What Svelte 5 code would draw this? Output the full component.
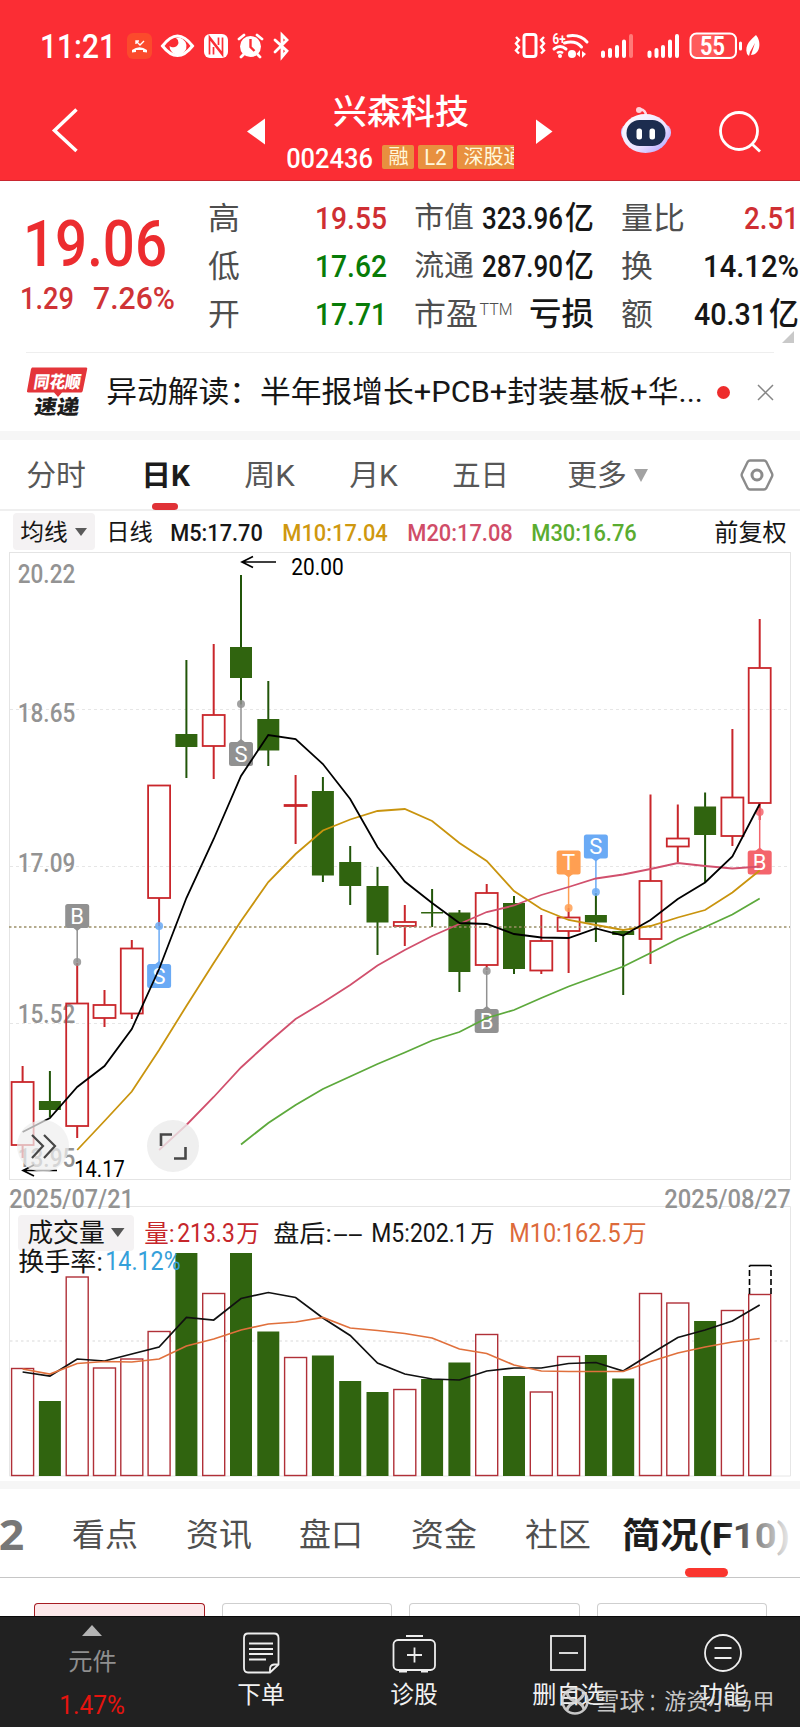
<script>
  // ── Quote header ──────────────────────────────────────────────
  // every value is a list of [text, width] runs
  const quoteCols = [
    [
      { label: '高', lw: 30, size: 31, tone: 'up', runs: [['19.55', 70]] },
      { label: '低', lw: 30, size: 31, tone: 'down', runs: [['17.62', 70]] },
      { label: '开', lw: 30, size: 31, tone: 'down', runs: [['17.71', 70]] },
    ],
    [
      { label: '市值', lw: 58, size: 29, runs: [['323.96', 79], ['亿', 27]] },
      { label: '流通', lw: 58, size: 29, runs: [['287.90', 79], ['亿', 27]] },
      { label: '市盈', lw: 62, size: 31, sup: 'TTM', runs: [['亏损', 63]] },
    ],
    [
      { label: '量比', lw: 62, size: 31, tone: 'up', runs: [['2.51', 53]] },
      { label: '换', lw: 30, size: 31, runs: [['14.12%', 94]] },
      { label: '额', lw: 30, size: 31, runs: [['40.31', 71], ['亿', 28]] },
    ],
  ]

  const periods = [
    ['分时', 58], ['日K', 47], ['周K', 49], ['月K', 47], ['五日', 55], ['更多', 58],
  ]

  const averages = [
    ['M5:17.70', 91, 'm5'], ['M10:17.04', 104, 'm10'],
    ['M20:17.08', 104, 'm20'], ['M30:16.76', 104, 'm30'],
  ]

  // ── K line ────────────────────────────────────────────────────
  const X0 = 22.6
  const STEP = 27.3
  const cx = (i) => X0 + i * STEP

  // [up, high, bodyTop, bodyBottom, low, volumeTop]
  const candles = [
    [1, 1066, 1082, 1145, 1158, 1368.5],
    [0, 1071, 1101, 1110, 1117, 1401],
    [1, 963, 1003.5, 1126, 1138, 1277],
    [1, 990, 1005, 1018, 1027, 1368],
    [1, 940, 948.5, 1013.5, 1019, 1359],
    [1, 785.5, 785.5, 898, 926, 1331.5],
    [0, 660, 734, 747, 778, 1253],
    [1, 644, 715, 746, 779, 1293.5],
    [0, 575, 647, 678, 705, 1253],
    [0, 681, 719, 750.5, 766, 1331.5],
    [1, 775, 805, 806, 844, 1357.5],
    [0, 777, 791, 875.5, 882, 1355.5],
    [0, 846, 862, 886, 905, 1381],
    [0, 867, 886, 922.5, 955, 1392],
    [1, 905, 922, 926, 946, 1389.5],
    [0, 889, 912, 913.5, 927, 1379],
    [0, 910, 912.5, 972, 992, 1362.5],
    [1, 884, 893, 965, 970, 1334.5],
    [0, 896, 903, 969, 974, 1376],
    [1, 915, 941, 970.5, 974, 1392],
    [1, 908, 917.5, 931, 973, 1356.5],
    [0, 893, 915, 922.5, 942, 1355],
    [0, 930, 931, 935, 995, 1378.5],
    [1, 794.5, 881, 939, 964, 1293.5],
    [1, 804.5, 838.5, 846.5, 862, 1303],
    [0, 792.5, 806.5, 835, 882, 1321],
    [1, 729, 797.5, 836, 846, 1310.5],
    [1, 619, 668, 803, 820, 1294.5],
  ].map(([up, high, top, bottom, low, vol], i) => ({ up, high, top, bottom, low, vol, x: cx(i) }))

  function line(start, ys) {
    return ys.map((y, i) => `${cx(start + i).toFixed(1)},${y}`).join(' ')
  }

  const ma5 = line(0, [1132, 1118, 1087, 1066, 1029, 969, 898, 839, 776, 735, 739, 764, 799, 847, 881.5, 903, 923, 924, 934, 937.5, 938, 928.5, 935.5, 920, 899, 882.5, 856.5, 804])
  const ma10 = line(2, [1150, 1121, 1091.5, 1050, 1006, 963, 921, 882, 854, 830.5, 819.5, 811, 809, 821, 843, 861, 891, 909, 920, 925, 930, 926, 917.5, 910, 892.5, 870.5])
  const ma20 = line(5, [1150, 1125, 1097, 1067.5, 1042.5, 1019, 1002.5, 985, 965.5, 950, 936, 924, 912, 905.5, 895, 887, 878.5, 874.5, 869, 863, 866, 868.5, 866.5])
  const ma30 = line(8, [1144.5, 1123, 1105, 1089, 1076.5, 1064, 1052.5, 1040.5, 1032, 1018, 1010, 998, 986.5, 976.5, 966.5, 953, 939, 927, 914.5, 898.5])
  const vma5 = line(0, [1372, 1376, 1359, 1361, 1354, 1347, 1317.5, 1320, 1298.5, 1292.5, 1297.5, 1318, 1335.5, 1363, 1374, 1379, 1380, 1371, 1368, 1368, 1363.5, 1362.5, 1371, 1354, 1337.5, 1330, 1321, 1305])
  const vma10 = line(0, [1369, 1374, 1363.5, 1361.5, 1362, 1359, 1346, 1339, 1330, 1324, 1322, 1317.5, 1328, 1330.5, 1333.5, 1338, 1349, 1353.5, 1365, 1371, 1371.5, 1371.5, 1371.5, 1361.5, 1353, 1347, 1342, 1338.5])

  const axis = [['20.22', 574], ['18.65', 713], ['17.09', 863], ['15.52', 1014], ['13.95', 1158]]

  // trade marks: candle index, letter, colour, box top, dot y
  const marks = [
    { i: 2, t: 'B', c: '#919191', y: 904, dot: 962 },
    { i: 8, t: 'S', c: '#919191', y: 742, dot: 704 },
    { i: 5, t: 'S', c: '#6aaaf5', y: 964, dot: 926 },
    { i: 17, t: 'B', c: '#919191', y: 1009, dot: 971 },
    { i: 20, t: 'T', c: '#ff9f52', y: 850.5, dot: 908 },
    { i: 21, t: 'S', c: '#6aaaf5', y: 834.5, dot: 892 },
    { i: 27, t: 'B', c: '#f4646c', y: 850.5, dot: 812 },
  ]

  const sections = [['看点', 64], ['资讯', 64], ['盘口', 62], ['资金', 64], ['社区', 64]]
</script>

{#snippet fit(text, width, size, cls = '')}
  <svg class="fit {cls}" {width} height={size}>
    <text x={-size * 0.03} y={size * 0.86} font-size={size} textLength={width + size * 0.06} lengthAdjust="spacingAndGlyphs">{text}</text>
  </svg>
{/snippet}

{#snippet label(text, x, yc, width, size, cls = '')}
  <text class={cls} x={x - size * 0.03} y={yc + size * 0.36} font-size={size} textLength={width + size * 0.06} lengthAdjust="spacingAndGlyphs">{text}</text>
{/snippet}

<div class="app">
  <header>
    <div class="status">
      {@render fit('11:21', 74, 33, 'medium')}
      <svg width="174" height="34" viewBox="124 29 174 34">
        <rect x="127" y="33" width="25" height="26" rx="6" fill="#fb4a2c" />
        <path d="M136 41l4 4 4-4M136 44v-3h3" fill="none" stroke="#fff" stroke-width="1.400" />
        <path d="M132 50q7.500-5.500 15 0v2.500l-4-.500v-2h-7v2l-4 .500z" fill="#fff" />
        <path d="M162.500 46q15-20 30 0q-15 19-30 0z" fill="none" stroke="#fff" stroke-width="3" />
        <path d="M176 38a8.500 8.500 0 1 1-6.500 8a5.500 5.500 0 0 0 9-3a5.500 5.500 0 0 0-2.500-5z" fill="#fff" />
        <rect x="204" y="34" width="24" height="24" rx="6" fill="#fff" />
        <path d="M209.500 54.500V37l12.500 16M222.500 37.500V55l-12.500-16M213.500 47v7.500M218.500 37.500V45" fill="none" stroke="#fb2d34" stroke-width="1.700" />
        <circle cx="250.500" cy="46.500" r="10.500" fill="#fff" />
        <path d="M239 39l5-4M262 39l-5-4M244 54l-3 3M257 54l3 3" stroke="#fff" stroke-width="2.800" stroke-linecap="round" />
        <path d="M250.500 39v8l4 4" fill="none" stroke="#fb2d34" stroke-width="2.400" />
        <path d="M275 40l12 11-5 6V35l5 5-12 12" fill="none" stroke="#fff" stroke-width="2.800" stroke-linecap="round" />
      </svg>
      <svg class="right" width="250" height="34" viewBox="512 29 250 34">
        <g fill="none" stroke="#fff">
          <rect x="524" y="34.500" width="12" height="22" rx="2.500" stroke-width="3" />
          <path d="M516 37l3 3-3 3.500 3 3.500-3 3.500 3 3M544 37l-3 3 3 3.500-3 3.500 3 3.500-3 3" stroke-width="2.400" />
          <path d="M568 36q12-2 19 6M564.500 43q11-3 17 4M554 49q6-5 12 0" stroke-width="3" stroke-linecap="round" />
          <path d="M557 53q3-2 6 0" stroke-width="2.500" />
        </g>
        <circle cx="560" cy="56" r="2" fill="#fff" />
        <circle cx="572" cy="54" r="4" fill="#fff" />
        <path d="M580 50v7l-3.500-3zM582 58v-7l4 3z" fill="#fff" />
        <text class="w700" x="552.500" y="43.500" font-size="14" fill="#fff" textLength="13" lengthAdjust="spacingAndGlyphs">6+</text>
        <g stroke="#fff" stroke-width="4" stroke-linecap="round">
          <path d="M603 52.500V56M610 50v6M617 47v9M624 41.500V56" />
          <path d="M631 36v20" stroke="#ff7a78" />
          <path d="M649.500 52.500V56M656.500 50v6M663 47v9M670 41.500V56M677 36v20" />
        </g>
        <rect x="690.500" y="33.500" width="45.500" height="24.500" rx="6" fill="#ff5b5b" stroke="#fff" stroke-width="2" />
        <rect x="717" y="35" width="17.500" height="21.500" rx="4" fill="#fb3b40" />
        <path d="M740.500 43v6" stroke="#fff" stroke-width="3" stroke-linecap="round" />
        <path d="M747 54c-3-10 5-15 9-19 6 7 4 20-5 20l4-12-5 9-1 4z" fill="#fff" />
        <text class="w700" x="700" y="54.500" font-size="25" fill="#fff" textLength="25" lengthAdjust="spacingAndGlyphs">55</text>
      </svg>
    </div>

    <div class="nav">
      <svg width="287" height="89" viewBox="0 92 287 89">
        <path d="M76.500 109.500L54.500 130.500 76.500 151" fill="none" stroke="#fff" stroke-width="3.500" />
        <path d="M247 131.500l18-13v26z" fill="#fff" />
      </svg>
      <div class="title">
        {@render fit('兴森科技', 134, 34, 'name')}
        <div class="codes">
          {@render fit('002436', 85, 28.5, 'medium')}
          <span class="tag t1">{@render fit('融', 19, 20)}</span>
          <span class="tag t2">{@render fit('L2', 21, 22)}</span>
          <span class="tag t3">{@render fit('深股通', 59, 20)}</span>
        </div>
      </div>
      <svg width="286" height="89" viewBox="514 92 286 89">
        <defs>
          <linearGradient id="robot" x1="0" y1="0" x2="1" y2="1">
            <stop offset="0" stop-color="#ffffff" />
            <stop offset="0.6" stop-color="#ece2ff" />
            <stop offset="1" stop-color="#a99bff" />
          </linearGradient>
        </defs>
        <path d="M536 119.500v24.500l16.500-12.500z" fill="#fff" />
        <circle cx="639" cy="110" r="3" fill="#ffd0d8" />
        <path d="M640 109q6 1 6 7" fill="none" stroke="#ffd9e6" stroke-width="2.500" />
        <rect x="621" y="124" width="50" height="17" rx="8" fill="#cfc2ff" />
        <ellipse cx="645.500" cy="133.500" rx="23.500" ry="19.500" fill="url(#robot)" />
        <rect x="626.500" y="120" width="39" height="26" rx="13" fill="#1c2c4f" />
        <rect x="636.500" y="128.500" width="5.500" height="11" rx="2.500" fill="#fff" />
        <rect x="649.500" y="128.500" width="5.500" height="11" rx="2.500" fill="#fff" />
        <circle cx="739" cy="131" r="18.500" fill="none" stroke="#fff" stroke-width="2.800" />
        <path d="M752 144l8 7.500" stroke="#fff" stroke-width="2.800" />
      </svg>
    </div>
  </header>

  <section class="quote">
    <div class="price">
      {@render fit('19.06', 140, 65, 'medium')}
      <div class="change">
        {@render fit('1.29', 52, 32, 'medium')}
        {@render fit('7.26%', 80, 32, 'medium')}
      </div>
    </div>
    {#each quoteCols as col}
      <div class="col">
        {#each col as cell}
          <div class="cell">
            <span class="key">
              {@render fit(cell.label, cell.lw, cell.size)}
              {#if cell.sup}{@render fit(cell.sup, 32, 17, 'sup')}{/if}
            </span>
            <span class="val {cell.tone ?? ''}">
              {#each cell.runs as [text, w]}{@render fit(text, w, 32, 'medium')}{/each}
            </span>
          </div>
        {/each}
      </div>
    {/each}
    <i class="corner"></i>
  </section>

  <section class="news">
    <svg width="62" height="52" viewBox="27 366 62 52">
      <path d="M32 367.500h54q1.500 0 1.200 1.500l-4.500 22q-.500 1.500-2 1.500H62l-4 4.500-4-4.500H28.500q-1.800 0-1.500-1.500l4-22z" fill="#e4353a" />
      <g transform="skewX(-9)" class="w900">
        <text x="94.500" y="388" font-size="17" fill="#fff" textLength="47" lengthAdjust="spacingAndGlyphs">同花顺</text>
        <text x="99" y="414" font-size="20" fill="#1d1d1d" textLength="45" lengthAdjust="spacingAndGlyphs">速递</text>
      </g>
    </svg>
    {@render fit('异动解读：半年报增长+PCB+封装基板+华...', 595, 29.5, 'headline')}
    <i class="dot"></i>
    <svg width="17" height="17" viewBox="0 0 17 17"><path d="M1 1l15 15M16 1L1 16" stroke="#858585" stroke-width="1.500" /></svg>
  </section>

  <nav class="periods">
    {#each periods as [text, w], i}
      <span class="period" class:on={i === 1}>
        {@render fit(text, w, 29)}
        {#if i === 5}<i class="caret big"></i>{/if}
      </span>
    {/each}
    <svg width="34" height="34" viewBox="0 0 34 34" fill="none" stroke="#8b8b8b">
      <path d="M10 2.500h14q1.500 0 2.300 1.300L32 15.500q.7 1.500 0 3L26.300 30.200q-.8 1.300-2.300 1.300H10q-1.500 0-2.300-1.300L2 18.500q-.7-1.500 0-3L7.700 3.800Q8.500 2.500 10 2.500z" stroke-width="2.400" />
      <circle cx="17" cy="17" r="5" stroke-width="3" />
    </svg>
  </nav>

  <div class="averages">
    <span class="pill">{@render fit('均线', 46, 23)}<i class="caret"></i></span>
    {@render fit('日线', 45, 23)}
    {#each averages as [text, w, tone]}
      {@render fit(text, w, 24, tone)}
    {/each}
    {@render fit('前复权', 71, 24)}
  </div>

  <svg class="chart" width="800" height="654" viewBox="0 552 800 654">
    <rect x="9.500" y="552.500" width="781" height="627" fill="none" stroke="#e4e4e4" />
    {#each [709.5, 866.5, 1023.5] as y}
      <path d="M10 {y}H790" stroke="#e6e6e6" stroke-dasharray="3 3" />
    {/each}
    {#each axis as [text, y]}
      {@render label(text, 18.5, y, 56, 26, 'axis')}
    {/each}

    {#each candles as c}
      {#if c.up}
        <path d="M{c.x} {c.high}V{c.top}M{c.x} {c.bottom}V{c.low}" stroke="#c9262b" stroke-width="2" />
        <rect x={c.x - 11} y={c.top} width="22" height={c.bottom - c.top} fill="none" stroke="#c9262b" stroke-width="1.800" />
      {:else}
        <path d="M{c.x} {c.high}V{c.low}" stroke="#215509" stroke-width="2" />
        <rect x={c.x - 11} y={c.top} width="22" height={c.bottom - c.top} fill="#30640f" />
      {/if}
    {/each}

    <path d="M9 927H790" stroke="#9c9068" stroke-width="1.600" stroke-dasharray="2.500 2.500" />

    {#each marks as m}
      {@const x = cx(m.i)}
      {@const below = m.y > m.dot}
      <path d="M{x} {m.dot}V{below ? m.y : m.y + 24}" stroke={m.c} stroke-width="1.500" />
      <circle cx={x} cy={m.dot} r="4" fill={m.c} opacity="0.85" />
      <path d={below ? `M${x - 5} ${m.y + 1}l5-4 5 4z` : `M${x - 5} ${m.y + 23}l5 4 5-4z`} fill={m.c} />
      <rect x={x - 12} y={m.y} width="24" height="24" rx="2.500" fill={m.c} />
      <text class="mark" x={x} y={m.y + 19.5} font-size="22" text-anchor="middle">{m.t}</text>
    {/each}

    <g fill="none" stroke-width="1.800">
      <polyline points={ma30} stroke="#5da93c" />
      <polyline points={ma20} stroke="#d1506d" />
      <polyline points={ma10} stroke="#c9940e" />
      <polyline points={ma5} stroke="#000" />
    </g>

    <path d="M276 562H242M253 556.500L242 562 253 567.500" fill="none" stroke="#000" stroke-width="1.700" />
    {@render label('20.00', 292, 566.5, 51, 23, 'plain')}
    <path d="M57 1170.500H23M34 1165L23 1170.500 34 1176" fill="none" stroke="#000" stroke-width="1.700" />
    {@render label('14.17', 75, 1168.5, 49, 23, 'plain')}

    <circle cx="43" cy="1146" r="26" fill="#efefef" opacity="0.72" />
    <path d="M32 1135l11 11-11 12M44 1135l11 11-11 12" fill="none" stroke="#474747" stroke-width="2.200" />
    <circle cx="173" cy="1146" r="26" fill="#ebebeb" opacity="0.8" />
    <path d="M161 1146v-11.500h11M174 1158.500h11.500V1147" fill="none" stroke="#474747" stroke-width="2.600" />
  </svg>

  <svg class="chart" width="800" height="275" viewBox="0 1206 800 275">
    <path d="M9.500 1476V1206.500H790.500V1476z" fill="none" stroke="#e6e6e6" />
    <path d="M10 1341H790" stroke="#e6e6e6" stroke-width="1.500" stroke-dasharray="2.500 3" />
    {@render label('2025/07/21', 10, 1198.5, 123, 26, 'axis')}
    {@render label('2025/08/27', 665, 1198.5, 125, 26, 'axis')}

    {#each candles as c}
      {#if c.up}
        <rect x={c.x - 11} y={c.vol} width="22" height={1475.5 - c.vol} fill="#fff" stroke="#b03038" stroke-width="1.400" />
      {:else}
        <rect x={c.x - 11} y={c.vol} width="22" height={1476 - c.vol} fill="#30640f" />
      {/if}
    {/each}
    <path d="M749.500 1294v-28.500M771 1294v-28.500" stroke="#000" stroke-width="1.600" stroke-dasharray="6 3" />
    <path d="M749.500 1265.500H771" stroke="#000" stroke-width="1.600" />

    <g fill="none" stroke-width="1.700">
      <polyline points={vma5} stroke="#111" />
      <polyline points={vma10} stroke="#e0703c" />
    </g>

    <rect x="18" y="1215" width="116" height="36" rx="4" fill="#f4f2f3" />
    {@render label('成交量', 28, 1233, 76, 26)}
    <path d="M111 1228h13.500l-6.700 9z" fill="#555" />
    {@render label('量:', 145, 1233, 29, 24, 'vol')}
    {@render label('213.3', 178, 1232.5, 56, 25, 'vol')}
    {@render label('万', 237, 1233, 22, 24, 'vol')}
    {@render label('盘后:', 274, 1233, 57, 24)}
    {@render label('--', 334, 1233, 28, 24)}
    {@render label('M5:202.1', 372, 1232.5, 95, 25)}
    {@render label('万', 471, 1233, 23, 24)}
    {@render label('M10:162.5', 510, 1232.5, 110, 25, 'vm10')}
    {@render label('万', 623, 1233, 23, 24, 'vm10')}
    {@render label('换手率:', 19, 1261.5, 83, 26)}
    {@render label('14.12%', 106, 1261, 74, 25, 'rate')}
  </svg>

  <nav class="sections">
    {@render fit('2', 23, 42, 'two')}
    {#each sections as [text, w]}
      {@render fit(text, w, 31.5)}
    {/each}
    <span class="active">{@render fit('简况(F10)', 166, 35)}</span>
  </nav>

  <div class="cards">
    <i class="card picked"></i><i class="card"></i><i class="card"></i><i class="card"></i>
  </div>

  <footer>
    <div class="sector">
      <i class="up-caret"></i>
      {@render fit('元件', 47, 24)}
      {@render fit('1.47%', 64, 26, 'pct')}
    </div>
    <div class="action">
      <svg width="44" height="44" viewBox="239 1631 44 44">
        <path d="M248 1633.500h26q4.500 0 4.500 4.500v26.500l-8.500 8h-22q-4 0-4-4.500v-30q0-4.500 4-4.500z" />
        <path d="M249 1643.500h24M249 1649h24M249 1654h24M249 1659.500h17M270 1672v-3q0-4 4-4.500h4" />
      </svg>
      {@render fit('下单', 46, 24)}
    </div>
    <div class="action">
      <svg width="44" height="44" viewBox="392 1631 44 44">
        <rect x="393.500" y="1640" width="41.500" height="30" rx="4.500" />
        <path d="M406 1636h17M407 1655h15M414.500 1647.500v15M399 1671.500h8M421 1671.500h7" />
      </svg>
      {@render fit('诊股', 46, 24)}
    </div>
    <div class="action">
      <svg width="44" height="44" viewBox="546 1631 44 44">
        <rect x="551" y="1636" width="34" height="34" />
        <path d="M559 1653h19" />
      </svg>
      {@render fit('删自选', 71, 24)}
    </div>
    <div class="action">
      <svg width="44" height="44" viewBox="700.500 1631 44 44">
        <circle cx="722.500" cy="1653" r="18" />
        <path d="M714 1648h17M714 1658h17" />
      </svg>
      {@render fit('功能', 46, 24)}
    </div>
    <div class="watermark">
      <svg width="32" height="32" viewBox="0 0 32 32" fill="none" stroke="currentColor">
        <circle cx="16" cy="16" r="12.500" stroke-width="2.500" />
        <path d="M8 7q1 7 8 9t9 8M25 8q-2 6-9 9t-8 8" stroke-width="3" />
      </svg>
      {@render fit('雪球', 49, 24)}
      {@render fit('：', 16, 24, 'colon')}
      {@render fit('游资小马甲', 109, 22)}
    </div>
  </footer>
</div>

<style>
  :global(body) {
    margin: 0;
    background: #fff;
  }

  .app {
    width: 800px;
    height: 1727px;
    overflow: hidden;
    background: #fff;
    color: #161616;
    font-family: Roboto, 'Noto Sans CJK SC', sans-serif;
  }

  svg {
    display: block;
    flex: none;
  }

  .fit,
  .chart {
    overflow: visible;
  }

  .fit text,
  .chart text {
    fill: currentColor;
  }

  .medium { font-weight: 500; }
  .w700 { font-weight: 700; }
  .w900 { font-weight: 900; }

  /* ── Header ── */
  header {
    box-sizing: border-box;
    height: 181px;
    background: #fb2d34;
    border-bottom: 1px solid #c92730;
    color: #fff;
  }

  .status {
    height: 92px;
    display: flex;
    align-items: center;
    padding: 0 38px 0 41px;
    gap: 9px;
  }

  .status .right { margin-left: auto; }

  .nav {
    display: grid;
    grid-template-columns: 287px 227px 286px;
  }

  .title {
    overflow: hidden;
    display: flex;
    flex-direction: column;
    align-items: center;
  }

  .name {
    margin-top: 3px;
    font-weight: 500;
  }

  .codes {
    align-self: stretch;
    display: flex;
    align-items: center;
    height: 24px;
    margin-top: 16px;
  }

  .tag {
    flex: none;
    display: flex;
    align-items: center;
    justify-content: center;
    height: 24px;
    margin-left: 4px;
    border-radius: 2px;
    background: #e8903f;
    color: #fff8dc;
  }

  .t1 { width: 32px; margin-left: 10px; }
  .t2 { width: 35px; }
  .t3 { width: 73px; }

  /* ── Quote ── */
  .quote {
    position: relative;
    box-sizing: border-box;
    height: 172px;
    display: grid;
    grid-template-columns: 208px 206px 207px 179px;
  }

  .quote::after {
    content: '';
    position: absolute;
    left: 26px;
    right: 26px;
    bottom: 0;
    height: 1px;
    background: #eee;
  }

  .price {
    padding: 28.5px 0 0 25px;
    color: #ec2c2f;
  }

  .change {
    display: flex;
    gap: 21px;
    margin: 6.5px 0 0 -4px;
    color: #cf3336;
  }

  .col { padding: 12px 28px 0 1px; }
  .col:nth-child(4) { padding-right: 2px; }

  .cell {
    height: 48px;
    display: flex;
    align-items: center;
    justify-content: space-between;
  }

  .key,
  .val { display: flex; align-items: center; }
  .key { color: #4e4e4e; }
  .val { gap: 4px; }
  .up { color: #cf2f33; }
  .down { color: #087c08; }
  .sup { margin: -10px 0 0 3px; font-weight: 300; }

  .corner {
    position: absolute;
    right: 6px;
    bottom: 10px;
    border-left: 12px solid transparent;
    border-bottom: 12px solid #c9c9c9;
  }

  /* ── News ── */
  .news {
    height: 78px;
    display: flex;
    align-items: center;
    padding-left: 27px;
  }

  .headline { margin-left: 18px; }
  .dot { width: 13px; height: 13px; margin: 0 27px 0 15px; border-radius: 50%; background: #ee2c2c; }

  /* ── Period tabs ── */
  .periods {
    box-sizing: border-box;
    height: 80px;
    border-top: 9px solid #f6f6f6;
    border-bottom: 2px solid #efefef;
    padding-left: 27px;
    display: grid;
    grid-template-columns: 115px 103px 105px 103px 115px 172px 34px;
    align-items: center;
    color: #575757;
  }

  .period {
    position: relative;
    box-sizing: border-box;
    height: 69px;
    padding-top: 2px;
    display: flex;
    align-items: center;
  }

  .on { color: #1c1c1c; font-weight: 700; }

  .on::after {
    content: '';
    position: absolute;
    left: 10px;
    bottom: -1px;
    width: 26px;
    height: 7px;
    border-radius: 3.5px;
    background: #e03237;
  }

  .caret {
    border: 6px solid transparent;
    border-top: 8px solid #5a5a5a;
    border-bottom: 0;
    margin-left: 8px;
  }

  .caret.big { border-width: 13px 7.5px 0; border-top-color: #a2a2a2; margin-left: 8px; }

  .averages {
    height: 41px;
    padding-left: 13px;
    display: grid;
    grid-template-columns: 94px 64px 112px 125px 124px 183px 80px;
    align-items: center;
  }

  .pill {
    width: 82px;
    height: 37px;
    border-radius: 4px;
    background: #f4f2f3;
    display: flex;
    align-items: center;
    justify-content: center;
  }

  .m5 { font-weight: 500; }
  .m10 { color: #cf980f; font-weight: 500; }
  .m20 { color: #d04d68; font-weight: 500; }
  .m30 { color: #5aac30; font-weight: 500; }

  /* ── Charts ── */
  .chart .axis { fill: #939393; font-weight: 500; }
  .chart .plain { fill: #000; }
  .chart .mark { fill: #fff; }
  .chart .vol { fill: #c6262b; }
  .chart .vm10 { fill: #dd6a3a; }
  .chart .rate { fill: #35a0da; }

  /* ── Sections ── */
  .sections {
    box-sizing: border-box;
    height: 97px;
    padding-top: 4px;
    border-top: 8px solid #f6f6f6;
    border-bottom: 1px solid #c6c6c6;
    display: grid;
    grid-template-columns: 73px 114px 113px 112px 114px 97px 177px;
    align-items: center;
    color: #505050;
  }

  .two { font-family: 'Noto Sans', sans-serif; font-weight: 700; color: #777; }

  .active {
    position: relative;
    height: 84px;
    display: flex;
    align-items: center;
    color: #1e1e1e;
    font-weight: 700;
  }

  .active::before {
    content: '';
    position: absolute;
    inset: 0 0 12px 100px;
    background: linear-gradient(90deg, #fff0, #fff 95%);
    z-index: 1;
  }

  .active::after {
    content: '';
    position: absolute;
    left: 62px;
    bottom: 0;
    width: 43px;
    height: 9px;
    border-radius: 4.5px;
    background: #fa362f;
  }

  .cards {
    height: 38px;
    padding: 25px 33px 0 34px;
    box-sizing: border-box;
    display: grid;
    grid-template-columns: repeat(4, 1fr);
    gap: 17px;
  }

  .card { border: 1px solid #cfcfcf; border-bottom: 0; border-radius: 4px 4px 0 0; }
  .picked { border-color: #a61c22; background: #fce8ea; }

  /* ── Footer ── */
  footer {
    position: relative;
    box-sizing: border-box;
    height: 111px;
    background: #212121;
    border-top: 1px solid #0a0a0a;
    display: grid;
    grid-template-columns: 168px 169px 154px 154px 155px;
    color: #f2f2f2;
  }

  .sector,
  .action {
    display: flex;
    flex-direction: column;
    align-items: center;
  }

  .sector {
    padding-left: 16px;
    color: #8f8f8f;
  }

  .up-caret {
    margin: 8px 0 13px;
    border: 10px solid transparent;
    border-top: 0;
    border-bottom: 11px solid #b4b4b4;
  }

  .pct { margin-top: 19px; color: #e5140f; }

  .action { padding-top: 14px; gap: 7px; }
  .action:nth-child(2) { padding-left: 17px; }
  .action > svg:first-child { fill: none; stroke: #eee; stroke-width: 1.8px; }

  .watermark {
    position: absolute;
    left: 559px;
    top: 68px;
    display: flex;
    align-items: center;
    color: #d9d9d9;
    opacity: 0.9;
  }

  .watermark > svg:first-child { margin-right: 4px; }
  .colon { margin: 0 0 0 5px; }
</style>
